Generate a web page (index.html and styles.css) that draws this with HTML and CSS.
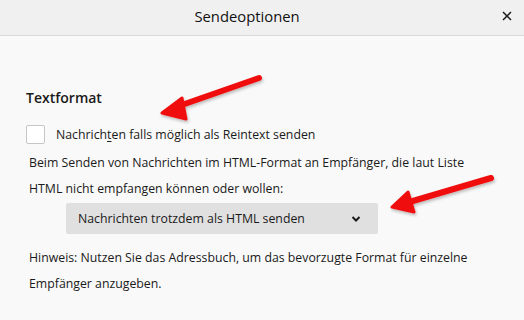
FILE: index.html
```html
<!DOCTYPE html>
<html lang="de">
<head>
    <meta charset="UTF-8">
    <meta name="viewport" content="width=device-width, initial-scale=1.0">
    <title>Sendeoptionen</title>
    <link rel="stylesheet" href="styles.css">
</head>
<body>
    <div class="dialog">
        <div class="dialog-header">
            <span class="dialog-title">Sendeoptionen</span>
            <button class="close-button" title="Schließen">
                <svg width="10" height="10" viewBox="0 0 10 10">
                    <path d="M1 1 L9 9 M9 1 L1 9" stroke="#1a1a1a" stroke-width="1.5" fill="none"/>
                </svg>
            </button>
        </div>

        <div class="dialog-content">
            <h2>Textformat</h2>

            <div class="checkbox-group">
                <input type="checkbox" id="plainText">
                <label for="plainText">Nachrich<u>t</u>en falls möglich als Reintext senden</label>
            </div>

            <p class="description">Beim Senden von Nachrichten im HTML-Format an Empfänger, die laut Liste HTML nicht empfangen können oder wollen:</p>

            <div class="select-box">
                <span>Nachrichten trotzdem als HTML senden</span>
                <svg width="10" height="6" viewBox="0 0 10 6">
                    <path d="M1.5 1 L5 4.5 L8.5 1" stroke="#1a1a1a" stroke-width="2" fill="none"/>
                </svg>
            </div>

            <p class="description hint">Hinweis: Nutzen Sie das Adressbuch, um das bevorzugte Format für einzelne Empfänger anzugeben.</p>
        </div>

        <!-- annotation arrows drawn over the screenshot -->
        <svg class="annotations" width="524" height="320" viewBox="0 0 524 320">
            <defs>
                <filter id="shadow" x="-10%" y="-10%" width="120%" height="140%">
                    <feDropShadow dx="1" dy="2" stdDeviation="1.5" flood-color="#000" flood-opacity="0.25"/>
                </filter>
            </defs>
            <g fill="#f01010" stroke="#f01010" stroke-linecap="round" stroke-linejoin="round" filter="url(#shadow)">
                <line x1="259" y1="78" x2="176" y2="107" stroke-width="6"/>
                <polygon points="162,113 182,98 186,119" stroke-width="3"/>
                <line x1="491" y1="178" x2="406" y2="203" stroke-width="6"/>
                <polygon points="392,207 408,192 414,212" stroke-width="3"/>
            </g>
        </svg>
    </div>
</body>
</html>
```

FILE: styles.css
```css
html, body {
    margin: 0;
    padding: 0;
}

body {
    font-family: 'Open Sans', 'Noto Sans', sans-serif;
    font-size: 12.3px;
    color: #1a1a1a;
    background-color: #f9f9f9;
}

.dialog {
    position: relative;
    width: 524px;
    height: 320px;
    overflow: hidden;
}

.dialog-header {
    position: relative;
    height: 35px;
    background-color: #f0f0f0;
    border-bottom: 1px solid #d9d9d9;
    display: flex;
    align-items: center;
    justify-content: center;
}

.dialog-title {
    font-size: 14.8px;
    color: #111111;
    margin: -3px 30px 0 0;
}

.close-button {
    position: absolute;
    right: 10px;
    top: 9px;
    width: 14px;
    height: 14px;
    padding: 0;
    border: none;
    background: none;
    display: flex;
    align-items: center;
    justify-content: center;
}

.dialog-content {
    padding: 52px 26px 0 26px;
}

h2 {
    margin: 0;
    font-size: 14px;
    font-weight: 600;
    line-height: 20px;
    color: #1a1a1a;
}

.checkbox-group {
    display: flex;
    align-items: center;
    margin-top: 16px;
    height: 20px;
}

.checkbox-group input[type="checkbox"] {
    appearance: none;
    -webkit-appearance: none;
    width: 19px;
    height: 19px;
    margin: 0 11px 0 0;
    border: 1px solid #c6c6c6;
    border-radius: 2px;
    background: #ffffff;
    box-sizing: border-box;
}

.checkbox-group label u {
    text-underline-offset: 2px;
}

.description {
    margin: 6px 0 0 3px;
    line-height: 26px;
}

.select-box {
    display: flex;
    align-items: center;
    justify-content: space-between;
    width: 312px;
    height: 31px;
    margin: 1px 0 0 40px;
    padding: 0 17px 0 12px;
    box-sizing: border-box;
    background-color: #e0e0e0;
    border-radius: 2px;
}

.hint {
    margin-top: 11px;
}

.annotations {
    position: absolute;
    left: 0;
    top: 0;
    pointer-events: none;
}
```
